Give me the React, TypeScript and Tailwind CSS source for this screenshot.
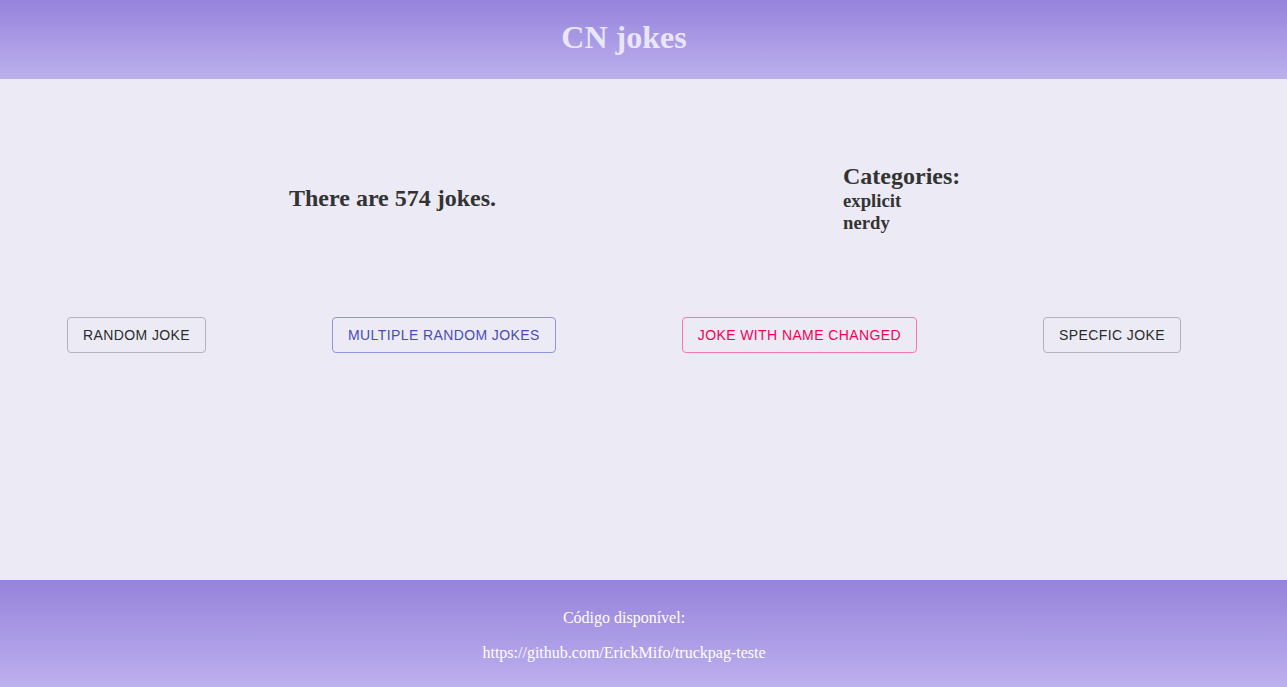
import React from "react";

const serif = "font-['Liberation_Serif','Times_New_Roman',serif]";

const btn =
    "h-[36px] px-[15px] rounded-[4px] border bg-transparent font-['Liberation_Sans',Arial,sans-serif] text-[14px] tracking-[0.4px] uppercase leading-none";

const App = () => {
    return (
        <div className={`min-h-screen flex flex-col bg-[#ecebf5] ${serif}`}>
            <header className="h-[79px] flex items-center justify-center pr-[39px] pb-[6px] bg-gradient-to-b from-[#9683db] to-[#bdb0ee]">
                <h1 className="text-[32px] font-bold text-[#e9e6f8] leading-none">CN jokes</h1>
            </header>

            <main className="h-[501px] flex flex-col pt-[83px]">
                <div className="flex items-center h-[71px]">
                    <div className="w-[843px] pl-[289px]">
                        <h2 className="text-[24px] font-bold text-[#333333] leading-tight">There are 574 jokes.</h2>
                    </div>
                    <div className="flex flex-col text-[#333333] font-bold">
                        <h2 className="text-[24px] leading-[28px]">Categories:</h2>
                        <h3 className="text-[18.7px] leading-[22px]">explicit</h3>
                        <h3 className="text-[18.7px] leading-[22px]">nerdy</h3>
                    </div>
                </div>

                <div className="flex justify-around pl-[4px] pr-[43px] mt-[84px]">
                    <button className={`${btn} border-[#b4b2c2] text-[#2b2b2b]`}>Random joke</button>
                    <button className={`${btn} border-[#8f95de] text-[#4a4cb8]`}>Multiple random jokes</button>
                    <button className={`${btn} border-[#f57aa5] text-[#f50057]`}>Joke with name changed</button>
                    <button className={`${btn} border-[#b4b2c2] text-[#2b2b2b]`}>Specfic joke</button>
                </div>
            </main>

            <footer className="h-[107px] flex flex-col items-center pr-[39px] pt-[29px] gap-[17px] bg-gradient-to-b from-[#9683db] to-[#bdb0ee] text-white text-[16px] leading-[18px]">
                <p>Código disponível:</p>
                <p>https://github.com/ErickMifo/truckpag-teste</p>
            </footer>
        </div>
    );
};

export default App;
